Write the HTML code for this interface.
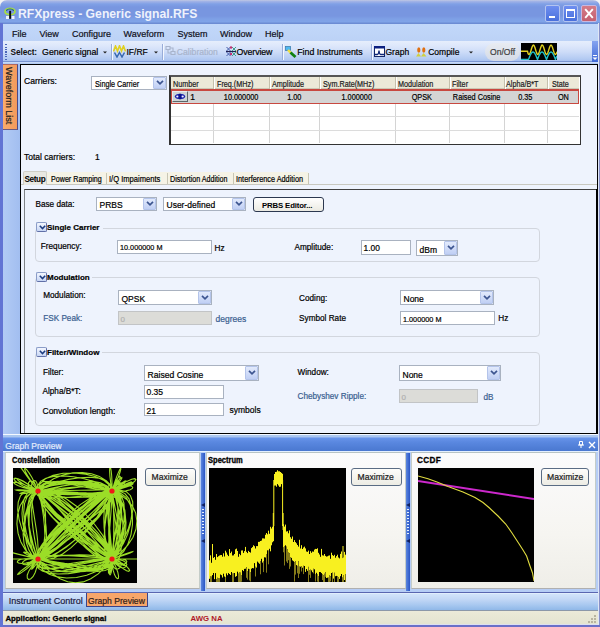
<!DOCTYPE html>
<html><head><meta charset="utf-8"><style>
*{box-sizing:border-box;margin:0;padding:0}
html,body{width:600px;height:627px;overflow:hidden;background:#6a7ed8}
body{position:relative;font-family:"Liberation Sans",sans-serif;font-size:9px;color:#000}
.a{position:absolute}
.t{position:absolute;white-space:nowrap;line-height:12px;color:#000;-webkit-text-stroke:0.2px currentColor}
.combo{position:absolute;background:#fff;border:1px solid #a9b2c0}
.combo .dd{position:absolute;right:0;top:0;bottom:0;background:linear-gradient(#e2eafc,#c0cff4);border:1px solid #b4c4ea;border-radius:1px}
.tb{position:absolute;background:#fff;border:1px solid #a9b2c0}
.dis{background:#dcdcd8;border-color:#c2c4c6}
.exp{position:absolute;width:11px;height:10px;border:1px solid #8a9cc8;border-right-color:#6070a8;border-bottom-color:#6070a8;background:linear-gradient(#f4f7ff,#c8d6f4);border-radius:2px}
.btnmax{position:absolute;border:1px solid #5a6c84;border-radius:3px;background:linear-gradient(#fdfdfb,#edece4)}
</style></head><body>
<div class="a" style="left:0px;top:0px;width:8px;height:8px;background:#f2f2f4"></div>
<div class="a" style="left:592px;top:0px;width:8px;height:8px;background:#f2f2f4"></div>
<div class="a" style="left:0px;top:0px;width:600px;height:24px;background:linear-gradient(#c0c8e4 0px,#a0b2e6 1.5px,#80a0e6 4px,#7896e0 7px,#7896e0 16px,#7ea0e6 19px,#80a4e8 22px,#6c8cd4 23px,#6c8cd4 24px);border-radius:7px 7px 0 0"></div>
<svg class="a" style="left:4px;top:7px" width="13" height="13" viewBox="0 0 13 13">
 <ellipse cx="6" cy="4.5" rx="5" ry="3.2" fill="none" stroke="#a8e040" stroke-width="1.7"/>
 <path d="M2.5,4 A3.5,2 0 0 1 9.5,4" fill="none" stroke="#2c6a80" stroke-width="1.2"/>
 <rect x="2" y="9" width="3" height="3" fill="#eef2ff"/><rect x="7.5" y="9" width="3" height="3" fill="#eef2ff"/>
 <rect x="5.2" y="3.8" width="1.9" height="8" fill="#0a0a0a"/>
</svg>
<div class="t" style="left:17.90px;top:8px;font-size:12.2px;font-weight:bold;-webkit-text-stroke:0;color:#eef2fc;">RFXpress - Generic signal.RFS</div>
<div class="a" style="left:545px;top:5px;width:15px;height:17px;border:1px solid #b4c4f0;border-radius:2px;background:linear-gradient(#6e8ef0,#4a70dc)"></div>
<div class="a" style="left:563px;top:5px;width:15px;height:17px;border:1px solid #b4c4f0;border-radius:2px;background:linear-gradient(#6e8ef0,#4a70dc)"></div>
<div class="a" style="left:581px;top:5px;width:16px;height:17px;border:1px solid #c8b8e0;border-radius:2px;background:linear-gradient(#d47c88,#c46070)"></div>
<div class="a" style="left:549px;top:16px;width:6px;height:2px;background:#fff"></div>
<div class="a" style="left:566px;top:9px;width:9px;height:9px;border:1px solid #fff;border-top-width:2px"></div>
<svg class="a" style="left:584px;top:8px" width="10" height="11" viewBox="0 0 10 11"><path d="M1.2,1.2L8.8,9.8M8.8,1.2L1.2,9.8" stroke="#fff" stroke-width="1.9"/></svg>
<div class="a" style="left:0px;top:23px;width:3px;height:604px;background:#6274d4"></div>
<div class="a" style="left:598px;top:23px;width:2px;height:604px;background:linear-gradient(90deg,#dfe6f6 50%,#8890c8 50%)"></div>
<div class="a" style="left:3px;top:24px;width:595px;height:17px;background:linear-gradient(#c2d8fa,#bcd2f6)"></div>
<div class="t" style="left:12.00px;top:28px;font-size:9px;color:#101020;">File</div>
<div class="t" style="left:39.50px;top:28px;font-size:9px;color:#101020;">View</div>
<div class="t" style="left:72.00px;top:28px;font-size:9px;color:#101020;">Configure</div>
<div class="t" style="left:123.50px;top:28px;font-size:9px;color:#101020;">Waveform</div>
<div class="t" style="left:177.50px;top:28px;font-size:9px;color:#101020;">System</div>
<div class="t" style="left:220.00px;top:28px;font-size:9px;color:#101020;">Window</div>
<div class="t" style="left:265.00px;top:28px;font-size:9px;color:#101020;">Help</div>
<div class="a" style="left:3px;top:41px;width:589px;height:21px;background:linear-gradient(#e6eefc 0px,#dde7fb 5px,#cddcf8 11px,#b3caf2 18px,#a4bdee 21px)"></div>
<div class="a" style="left:592px;top:41px;width:6px;height:21px;background:linear-gradient(#86a4f0,#3d68d6)"></div>
<svg class="a" style="left:592px;top:55px" width="6" height="6"><path d="M1,0.5H5" stroke="#fff"/><path d="M0.5,2.5H5.5L3,5Z" fill="#fff"/></svg>
<div class="a" style="left:5px;top:44px;width:2px;height:16px;background:repeating-linear-gradient(#4a66b8 0 1px,transparent 1px 2.5px)"></div>
<div class="t" style="left:10.50px;top:46px;font-size:8.3px;font-weight:bold;-webkit-text-stroke:0;color:#101010;letter-spacing:-0.1px">Select:</div>
<div class="t" style="left:42.10px;top:46px;font-size:8.8px;">Generic signal</div>
<svg class="a" style="left:103.0px;top:51px" width="4" height="3"><path d="M0,0.5H4L2,2.5Z" fill="#202020"/></svg>
<div class="a" style="left:111px;top:44px;width:1px;height:16px;background:#98acd8;box-shadow:1px 0 #f4f8ff"></div>
<svg class="a" style="left:113px;top:45px" width="13" height="13" viewBox="0 0 13 13">
 <path d="M0.5,6.5 L2.5,1 L4.5,6 L6.5,0.8 L8.5,6 L10.5,1 L12.5,6.5" fill="none" stroke="#e0d020" stroke-width="1.6"/>
 <path d="M1.5,7.5 L4,12 L6.5,7.5 L9,12 L11.5,7.5" fill="none" stroke="#3868b0" stroke-width="1.5"/>
</svg>
<div class="t" style="left:126.50px;top:46px;font-size:8.5px;">IF/RF</div>
<svg class="a" style="left:153.5px;top:51px" width="4" height="3"><path d="M0,0.5H4L2,2.5Z" fill="#202020"/></svg>
<div class="a" style="left:161.5px;top:44px;width:1px;height:16px;background:#98acd8;box-shadow:1px 0 #f4f8ff"></div>
<svg class="a" style="left:165px;top:45px" width="11" height="11" viewBox="0 0 11 11"><path d="M1,1.5h4v3h-4zM6,6.5h4v3h-4zM3,4.5v3.5h3M5,3h3v3.5" fill="none" stroke="#a8b4cc" stroke-width="1.1"/></svg>
<div class="t" style="left:176.80px;top:46px;font-size:8.6px;color:#a8b4cc;">Calibration</div>
<svg class="a" style="left:226px;top:46px" width="11" height="10" viewBox="0 0 11 10"> <path d="M0,5.5h10" stroke="#202050" stroke-width="1.2"/> <path d="M0.5,1L4.5,5M4.5,1L0.5,5M0.5,6L4.5,10M4.5,6L0.5,10" stroke="#4058a8" stroke-width="1"/> <path d="M6,1L10,5M10,1L6,5M6,6L10,10M10,6L6,10" stroke="#40a090" stroke-width="1"/> <circle cx="5" cy="1.5" r="1.2" fill="#c03070"/><circle cx="5" cy="8" r="1.2" fill="#c03070"/> </svg>
<div class="t" style="left:236.50px;top:46px;font-size:8.8px;letter-spacing:-0.1px">Overview</div>
<div class="a" style="left:282px;top:44px;width:1px;height:16px;background:#98acd8;box-shadow:1px 0 #f4f8ff"></div>
<svg class="a" style="left:285px;top:46px" width="12" height="12" viewBox="0 0 12 12"> <rect x="0.5" y="0.5" width="5" height="4" fill="#50b8f0" stroke="#4080b0" stroke-width="0.8"/> <path d="M3,4L6,7" stroke="#f0e040" stroke-width="2.4"/> <path d="M5.5,6.5L10.5,11" stroke="#108010" stroke-width="2.8"/> </svg>
<div class="t" style="left:297.20px;top:46px;font-size:8.8px;">Find Instruments</div>
<div class="a" style="left:370.5px;top:44px;width:1px;height:16px;background:#98acd8;box-shadow:1px 0 #f4f8ff"></div>
<svg class="a" style="left:374px;top:46px" width="11" height="11" viewBox="0 0 11 11"> <rect x="0.5" y="0.5" width="10" height="10" fill="#fff" stroke="#14286a"/><rect x="0" y="0" width="11" height="2.5" fill="#0c2080"/> <path d="M1,8.5H3.5Q4.5,8.5 5,4.5Q5.5,8.5 6.5,8.5H10" fill="none" stroke="#102878" stroke-width="1.3"/> </svg>
<div class="t" style="left:385.50px;top:46px;font-size:8.5px;">Graph</div>
<svg class="a" style="left:416px;top:46px" width="11" height="11" viewBox="0 0 11 11"> <ellipse cx="2.8" cy="4" rx="1.6" ry="2.8" fill="#e07010"/><ellipse cx="7.8" cy="4" rx="1.6" ry="2.8" fill="#e07010"/> <path d="M0,10.5L2.5,7L5,10.5ZM5,10.5L7.5,7L10.5,10.5Z" fill="#d0d040"/> </svg>
<div class="t" style="left:428.20px;top:46px;font-size:8.5px;">Compile</div>
<svg class="a" style="left:468.5px;top:51px" width="4" height="3"><path d="M0,0.5H4L2,2.5Z" fill="#202020"/></svg>
<div class="a" style="left:485px;top:43px;width:35px;height:18px;border-radius:9px;background:linear-gradient(#e8ecf2,#d4dae6)"></div>
<div class="t" style="left:489.50px;top:46px;font-size:9px;color:#404040;transform:scaleX(0.95);transform-origin:0 0;">On/Off</div>
<svg class="a" style="left:520.5px;top:43px" width="36" height="17" viewBox="0 0 36 17"><rect width="36" height="17" fill="#000"/>
 <path d="M0.0,8.2 L6.5,8.2 L7.0,10.4 L7.5,11.2 L8.0,11.5 L8.5,11.2 L9.0,10.4 L9.5,9.1 L10.0,7.5 L10.5,5.8 L11.0,4.3 L11.5,3.0 L12.0,2.3 L12.5,2.1 L13.0,2.5 L13.5,3.5 L14.0,4.8 L14.5,6.5 L15.0,8.1 L15.5,9.6 L16.0,10.8 L16.5,11.4 L17.0,11.5 L17.5,10.9 L18.0,9.9 L18.5,8.4 L19.0,6.8 L19.5,5.2 L20.0,3.7 L20.5,2.7 L21.0,2.1 L21.5,2.2 L22.0,2.8 L22.5,4.0 L23.0,5.5 L23.5,7.1 L24.0,8.8 L24.5,10.1 L25.0,11.1 L25.5,11.5 L26.0,11.3 L26.5,10.6 L27.0,9.3 L27.5,7.8 L28.0,6.1 L28.5,4.5 L29.0,3.2 L29.5,2.4 L30.0,2.1 L30.5,2.4 L31.0,3.2 L31.5,4.5 L32.0,6.1 L32.5,7.8 L33.0,9.3 L33.5,10.6 L34.0,11.3 L34.5,11.5 L35.0,11.1 L35.5,10.1 L36.0,8.8" fill="none" stroke="#e0d020" stroke-width="1.4"/>
 <path d="M0.0,16.5 L7.0,16.5 L7.5,16.5 L8.0,15.2 L8.5,13.9 L9.0,12.8 L9.5,11.7 L10.0,10.8 L10.5,10.0 L11.0,9.5 L11.5,9.1 L12.0,9.0 L12.5,9.1 L13.0,9.5 L13.5,10.0 L14.0,10.8 L14.5,11.7 L15.0,12.7 L15.5,13.9 L16.0,15.2 L16.5,16.5 L17.0,15.2 L17.5,13.9 L18.0,12.8 L18.5,11.7 L19.0,10.8 L19.5,10.0 L20.0,9.5 L20.5,9.1 L21.0,9.0 L21.5,9.1 L22.0,9.5 L22.5,10.0 L23.0,10.8 L23.5,11.7 L24.0,12.8 L24.5,13.9 L25.0,15.2 L25.5,16.5 L26.0,15.2 L26.5,13.9 L27.0,12.8 L27.5,11.7 L28.0,10.8 L28.5,10.0 L29.0,9.5 L29.5,9.1 L30.0,9.0 L30.5,9.1 L31.0,9.5 L31.5,10.0 L32.0,10.8 L32.5,11.7 L33.0,12.8 L33.5,13.9 L34.0,15.2 L34.5,16.5 L35.0,15.2 L35.5,13.9 L36.0,12.8" fill="none" stroke="#20c0c8" stroke-width="1.4"/>
</svg>
<div class="a" style="left:3px;top:61px;width:589px;height:1px;background:#7894d0"></div>
<div class="a" style="left:3px;top:62px;width:595px;height:2px;background:linear-gradient(#d0e0fa,#a8c4f0)"></div>
<div class="a" style="left:3px;top:64px;width:17px;height:370px;background:linear-gradient(90deg,#b2cbf5,#a2bef0)"></div>
<div class="a" style="left:3px;top:64px;width:15px;height:66px;background:linear-gradient(90deg,#f8ac6c,#f29a5c);border-right:1px solid #4a4a88;border-bottom:1px solid #6a5a80;border-top:1px solid #b06860"></div>
<div class="t" style="left:15px;top:66.5px;transform-origin:0 0;transform:rotate(90deg);font-size:9px;color:#202020;line-height:12px">Waveform List</div>
<div class="a" style="left:20px;top:64px;width:578px;height:370px;border:1px solid #000;background:#eef3fd"></div>
<div class="t" style="left:24.00px;top:75px;font-size:8.6px;">Carriers:</div>
<div class="combo" style="left:91px;top:76px;width:76px;height:14px"><div class="dd" style="width:13px"><svg width="8" height="5" style="position:absolute;left:2px;top:2px"><path d="M1,0.8L4,3.8L7,0.8" fill="none" stroke="#3d5590" stroke-width="1.7"/></svg></div></div>
<div class="t" style="left:94.50px;top:78px;font-size:8.6px;transform:scaleX(0.84);transform-origin:0 0;">Single Carrier</div>
<div class="t" style="left:24.00px;top:151px;font-size:8.5px;">Total carriers:</div>
<div class="t" style="left:95.00px;top:151px;font-size:8.5px;">1</div>
<div class="a" style="left:169px;top:75px;width:412px;height:70px;background:#fff;border:1px solid #333;border-width:1px 1px 1px 2px;border-top:2px solid #555"></div>
<div class="a" style="left:171px;top:77px;width:408px;height:12px;background:#ece9d8;border-bottom:1px solid #cbc7b4"></div>
<div class="a" style="left:213px;top:89px;width:1px;height:54px;background:#d4d4d4"></div>
<div class="a" style="left:213px;top:77px;width:1px;height:12px;background:#c4c0ac;box-shadow:1px 0 #fff"></div>
<div class="a" style="left:269px;top:89px;width:1px;height:54px;background:#d4d4d4"></div>
<div class="a" style="left:269px;top:77px;width:1px;height:12px;background:#c4c0ac;box-shadow:1px 0 #fff"></div>
<div class="a" style="left:319px;top:89px;width:1px;height:54px;background:#d4d4d4"></div>
<div class="a" style="left:319px;top:77px;width:1px;height:12px;background:#c4c0ac;box-shadow:1px 0 #fff"></div>
<div class="a" style="left:395px;top:89px;width:1px;height:54px;background:#d4d4d4"></div>
<div class="a" style="left:395px;top:77px;width:1px;height:12px;background:#c4c0ac;box-shadow:1px 0 #fff"></div>
<div class="a" style="left:449px;top:89px;width:1px;height:54px;background:#d4d4d4"></div>
<div class="a" style="left:449px;top:77px;width:1px;height:12px;background:#c4c0ac;box-shadow:1px 0 #fff"></div>
<div class="a" style="left:504px;top:89px;width:1px;height:54px;background:#d4d4d4"></div>
<div class="a" style="left:504px;top:77px;width:1px;height:12px;background:#c4c0ac;box-shadow:1px 0 #fff"></div>
<div class="a" style="left:547px;top:89px;width:1px;height:54px;background:#d4d4d4"></div>
<div class="a" style="left:547px;top:77px;width:1px;height:12px;background:#c4c0ac;box-shadow:1px 0 #fff"></div>
<div class="a" style="left:171px;top:116px;width:408px;height:1px;background:#dcdcdc"></div>
<div class="a" style="left:171px;top:130px;width:408px;height:1px;background:#dcdcdc"></div>
<div class="a" style="left:171px;top:89px;width:408px;height:15px;background:#d4d4d4;border:1px solid #c84840;border-width:2px 1px 1px 1px"></div>
<div class="a" style="left:172px;top:91px;width:16px;height:11px;background:#cdd4d6;border:1px solid #e6ecee;border-right-color:#5c6668;border-bottom-color:#5c6668"></div>
<svg class="a" style="left:174px;top:93px" width="12" height="7" viewBox="0 0 12 7"><ellipse cx="6" cy="3.5" rx="5.2" ry="2.8" fill="#1a20a8"/><circle cx="3.3" cy="3.5" r="1.1" fill="#f0f0ff"/><circle cx="8.7" cy="3.5" r="1.1" fill="#f0f0ff"/><rect x="5.3" y="0.8" width="1.4" height="5.4" fill="#0a1070"/></svg>
<div class="t" style="left:173.40px;top:78px;font-size:8.6px;color:#202020;transform:scaleX(0.84);transform-origin:0 0;">Number</div>
<div class="t" style="left:217.40px;top:78px;font-size:8.6px;color:#202020;transform:scaleX(0.84);transform-origin:0 0;">Freq.(MHz)</div>
<div class="t" style="left:271.50px;top:78px;font-size:8.6px;color:#202020;transform:scaleX(0.84);transform-origin:0 0;">Amplitude</div>
<div class="t" style="left:322.80px;top:78px;font-size:8.6px;color:#202020;transform:scaleX(0.84);transform-origin:0 0;">Sym.Rate(MHz)</div>
<div class="t" style="left:398.00px;top:78px;font-size:8.6px;color:#202020;transform:scaleX(0.84);transform-origin:0 0;">Modulation</div>
<div class="t" style="left:452.20px;top:78px;font-size:8.6px;color:#202020;transform:scaleX(0.84);transform-origin:0 0;">Filter</div>
<div class="t" style="left:506.00px;top:78px;font-size:8.6px;color:#202020;transform:scaleX(0.84);transform-origin:0 0;">Alpha/B*T</div>
<div class="t" style="left:552.00px;top:78px;font-size:8.6px;color:#202020;transform:scaleX(0.84);transform-origin:0 0;">State</div>
<div class="t" style="left:190.20px;top:91px;font-size:8.5px;">1</div>
<div class="t" style="left:213px;width:56px;top:91px;font-size:8.5px;text-align:center"><span style="display:inline-block;transform:scaleX(0.86)">10.000000</span></div>
<div class="t" style="left:269px;width:50px;top:91px;font-size:8.5px;text-align:center"><span style="display:inline-block;transform:scaleX(0.86)">1.00</span></div>
<div class="t" style="left:319px;width:76px;top:91px;font-size:8.5px;text-align:center"><span style="display:inline-block;transform:scaleX(0.86)">1.000000</span></div>
<div class="t" style="left:395px;width:54px;top:91px;font-size:8.5px;text-align:center"><span style="display:inline-block;transform:scaleX(0.86)">QPSK</span></div>
<div class="t" style="left:449px;width:55px;top:91px;font-size:8.5px;text-align:center"><span style="display:inline-block;transform:scaleX(0.86)">Raised Cosine</span></div>
<div class="t" style="left:504px;width:43px;top:91px;font-size:8.5px;text-align:center"><span style="display:inline-block;transform:scaleX(0.86)">0.35</span></div>
<div class="t" style="left:547px;width:32px;top:91px;font-size:8.5px;text-align:center"><span style="display:inline-block;transform:scaleX(0.86)">ON</span></div>
<div class="a" style="left:21px;top:184px;width:576px;height:1px;background:#c8c8c0"></div>
<div class="a" style="left:23px;top:171px;width:24px;height:14px;background:#e8e8e2;border:1px solid #d0cfc6;border-bottom:none;border-radius:2px 2px 0 0"></div>
<div class="t" style="left:24.50px;top:174px;font-size:8.2px;font-weight:bold;-webkit-text-stroke:0;letter-spacing:-0.4px">Setup</div>
<div class="a" style="left:47px;top:172px;width:261px;height:12px;background:#f5f3e6"></div>
<div class="a" style="left:105.5px;top:173px;width:1px;height:11px;background:#c8c6b4"></div>
<div class="a" style="left:166.5px;top:173px;width:1px;height:11px;background:#c8c6b4"></div>
<div class="a" style="left:232.5px;top:173px;width:1px;height:11px;background:#c8c6b4"></div>
<div class="a" style="left:307.5px;top:173px;width:1px;height:11px;background:#c8c6b4"></div>
<div class="t" style="left:50.50px;top:173px;font-size:8.5px;transform:scaleX(0.84);transform-origin:0 0;">Power Ramping</div>
<div class="t" style="left:109.20px;top:173px;font-size:8.5px;transform:scaleX(0.89);transform-origin:0 0;">I/Q Impaiments</div>
<div class="t" style="left:170.20px;top:173px;font-size:8.5px;transform:scaleX(0.84);transform-origin:0 0;">Distortion Addition</div>
<div class="t" style="left:236.30px;top:173px;font-size:8.5px;transform:scaleX(0.86);transform-origin:0 0;">Interference Addition</div>
<div class="a" style="left:24px;top:189px;width:573px;height:244px;border-left:1px solid #808488;border-top:1px solid #404040;background:#eef3fd"></div>
<div class="a" style="left:596px;top:189px;width:2px;height:245px;background:#000"></div>
<div class="a" style="left:21px;top:433px;width:577px;height:1px;background:#000"></div>
<div class="t" style="left:35.50px;top:199px;font-size:8.2px;">Base data:</div>
<div class="combo" style="left:96px;top:197px;width:61px;height:14px"><div class="dd" style="width:13px"><svg width="8" height="5" style="position:absolute;left:2px;top:2px"><path d="M1,0.8L4,3.8L7,0.8" fill="none" stroke="#3d5590" stroke-width="1.7"/></svg></div></div>
<div class="t" style="left:99.50px;top:199px;font-size:8.5px;">PRBS</div>
<div class="combo" style="left:163px;top:197px;width:83px;height:14px"><div class="dd" style="width:13px"><svg width="8" height="5" style="position:absolute;left:2px;top:2px"><path d="M1,0.8L4,3.8L7,0.8" fill="none" stroke="#3d5590" stroke-width="1.7"/></svg></div></div>
<div class="t" style="left:166.50px;top:199px;font-size:8.5px;">User-defined</div>
<div class="a" style="left:253px;top:197px;width:71px;height:15px;border:1px solid #2c3850;border-radius:3px;background:linear-gradient(#ffffff,#ebeae2)"></div>
<div class="t" style="left:262.00px;top:200px;font-size:7.8px;font-weight:bold;-webkit-text-stroke:0;letter-spacing:-0.15px">PRBS Editor...</div>
<div class="a" style="left:35px;top:228px;width:505px;height:34px;border:1px solid #d2d6de;border-radius:4px"></div>
<div class="a" style="left:46px;top:226px;width:57px;height:5px;background:#eef3fd"></div>
<div class="exp" style="left:36px;top:222px"><svg width="7" height="5" style="position:absolute;left:1.5px;top:2px"><path d="M0.8,0.8L3.5,3.6L6.2,0.8" fill="none" stroke="#1c3c80" stroke-width="1.5"/></svg></div>
<div class="t" style="left:47.00px;top:222px;font-size:8px;font-weight:bold;-webkit-text-stroke:0;color:#000;-webkit-text-stroke:0.2px #000">Single Carrier</div>
<div class="t" style="left:40.80px;top:241px;font-size:8.2px;">Frequency:</div>
<div class="tb" style="left:117px;top:240px;width:95px;height:14px"></div>
<div class="t" style="left:119.50px;top:242px;font-size:8px;transform:scaleX(0.91);transform-origin:0 0;">10.000000 M</div>
<div class="t" style="left:214.50px;top:243px;font-size:8.2px;">Hz</div>
<div class="t" style="left:294.50px;top:242px;font-size:8.2px;">Amplitude:</div>
<div class="tb" style="left:361px;top:240px;width:50px;height:15px"></div>
<div class="t" style="left:363.50px;top:242px;font-size:8.4px;">1.00</div>
<div class="combo" style="left:416px;top:240px;width:42px;height:16px"><div class="dd" style="width:13px"><svg width="8" height="5" style="position:absolute;left:2px;top:3px"><path d="M1,0.8L4,3.8L7,0.8" fill="none" stroke="#3d5590" stroke-width="1.7"/></svg></div></div>
<div class="t" style="left:419.50px;top:244px;font-size:8.5px;">dBm</div>
<div class="a" style="left:35px;top:277px;width:505px;height:60px;border:1px solid #d2d6de;border-radius:4px"></div>
<div class="a" style="left:46px;top:275px;width:46px;height:5px;background:#eef3fd"></div>
<div class="exp" style="left:36px;top:272px"><svg width="7" height="5" style="position:absolute;left:1.5px;top:2px"><path d="M0.8,0.8L3.5,3.6L6.2,0.8" fill="none" stroke="#1c3c80" stroke-width="1.5"/></svg></div>
<div class="t" style="left:47.00px;top:272px;font-size:8px;font-weight:bold;-webkit-text-stroke:0;color:#000;-webkit-text-stroke:0.2px #000">Modulation</div>
<div class="t" style="left:43.20px;top:290px;font-size:8.2px;">Modulation:</div>
<div class="combo" style="left:118px;top:290px;width:94px;height:15px"><div class="dd" style="width:13px"><svg width="8" height="5" style="position:absolute;left:2px;top:3px"><path d="M1,0.8L4,3.8L7,0.8" fill="none" stroke="#3d5590" stroke-width="1.7"/></svg></div></div>
<div class="t" style="left:121.50px;top:293px;font-size:8.5px;">QPSK</div>
<div class="t" style="left:43.20px;top:313px;font-size:8.2px;color:#3a6090;">FSK Peak:</div>
<div class="tb dis" style="left:118px;top:311px;width:94px;height:14px"></div>
<div class="t" style="left:120.50px;top:314px;font-size:8px;color:#b0b0b0;">0</div>
<div class="t" style="left:215.50px;top:313px;font-size:8.5px;color:#3a6090;">degrees</div>
<div class="t" style="left:299.10px;top:293px;font-size:8.2px;">Coding:</div>
<div class="combo" style="left:400px;top:290px;width:94px;height:15px"><div class="dd" style="width:13px"><svg width="8" height="5" style="position:absolute;left:2px;top:3px"><path d="M1,0.8L4,3.8L7,0.8" fill="none" stroke="#3d5590" stroke-width="1.7"/></svg></div></div>
<div class="t" style="left:403.50px;top:293px;font-size:8.5px;">None</div>
<div class="t" style="left:299.10px;top:313px;font-size:8.2px;">Symbol Rate</div>
<div class="tb" style="left:400px;top:311px;width:95px;height:14px"></div>
<div class="t" style="left:402.50px;top:314px;font-size:8px;transform:scaleX(0.91);transform-origin:0 0;">1.000000 M</div>
<div class="t" style="left:498.30px;top:313px;font-size:8.2px;">Hz</div>
<div class="a" style="left:35px;top:352px;width:505px;height:74px;border:1px solid #d2d6de;border-radius:4px"></div>
<div class="a" style="left:46px;top:350px;width:56px;height:5px;background:#eef3fd"></div>
<div class="exp" style="left:36px;top:347px"><svg width="7" height="5" style="position:absolute;left:1.5px;top:2px"><path d="M0.8,0.8L3.5,3.6L6.2,0.8" fill="none" stroke="#1c3c80" stroke-width="1.5"/></svg></div>
<div class="t" style="left:47.00px;top:347px;font-size:8px;font-weight:bold;-webkit-text-stroke:0;color:#000;-webkit-text-stroke:0.2px #000">Filter/Window</div>
<div class="t" style="left:43.00px;top:367px;font-size:8.2px;">Filter:</div>
<div class="combo" style="left:144px;top:365px;width:115px;height:16px"><div class="dd" style="width:13px"><svg width="8" height="5" style="position:absolute;left:2px;top:3px"><path d="M1,0.8L4,3.8L7,0.8" fill="none" stroke="#3d5590" stroke-width="1.7"/></svg></div></div>
<div class="t" style="left:147.50px;top:369px;font-size:8.6px;">Raised Cosine</div>
<div class="t" style="left:42.50px;top:386px;font-size:8.2px;">Alpha/B*T:</div>
<div class="tb" style="left:144px;top:385px;width:80px;height:14px"></div>
<div class="t" style="left:146.50px;top:386px;font-size:8.5px;">0.35</div>
<div class="t" style="left:42.50px;top:405px;font-size:8.5px;">Convolution length:</div>
<div class="tb" style="left:144px;top:403px;width:80px;height:13px"></div>
<div class="t" style="left:146.50px;top:405px;font-size:8.5px;">21</div>
<div class="t" style="left:229.50px;top:404px;font-size:8.5px;">symbols</div>
<div class="t" style="left:297.50px;top:367px;font-size:8.2px;">Window:</div>
<div class="combo" style="left:399px;top:365px;width:102px;height:16px"><div class="dd" style="width:13px"><svg width="8" height="5" style="position:absolute;left:2px;top:3px"><path d="M1,0.8L4,3.8L7,0.8" fill="none" stroke="#3d5590" stroke-width="1.7"/></svg></div></div>
<div class="t" style="left:402.50px;top:369px;font-size:8.5px;">None</div>
<div class="t" style="left:297.50px;top:391px;font-size:8.2px;color:#3a6090;">Chebyshev Ripple:</div>
<div class="tb dis" style="left:399px;top:389px;width:79px;height:14px"></div>
<div class="t" style="left:401.50px;top:392px;font-size:8px;color:#b0b0b0;">0</div>
<div class="t" style="left:483.50px;top:392px;font-size:8.2px;color:#3a6090;">dB</div>
<div class="a" style="left:3px;top:434px;width:595px;height:1px;background:#f4f8ff"></div>
<div class="a" style="left:3px;top:435px;width:595px;height:2px;background:#abc7f0"></div>
<div class="a" style="left:3px;top:437px;width:595px;height:14px;background:linear-gradient(#a8c4f4 0px,#6894ea 1px,#5a88e0 5px,#4a78d0 14px)"></div>
<div class="a" style="left:3px;top:451px;width:595px;height:1px;background:#e4f0ff"></div>
<div class="t" style="left:5.30px;top:440px;font-size:8.5px;color:#e4ecfc;">Graph Preview</div>
<svg class="a" style="left:578px;top:441px" width="6" height="7" viewBox="0 0 6 7"><path d="M1.5,0.5H4.5V4H1.5ZM0,4H6M3,4V7" fill="none" stroke="#fff" stroke-width="1"/></svg>
<svg class="a" style="left:588px;top:441px" width="8" height="8" viewBox="0 0 8 8"><path d="M1,1L7,7M7,1L1,7" stroke="#fff" stroke-width="1.4"/></svg>
<div class="a" style="left:3px;top:452px;width:595px;height:140px;background:#b6cdf5"></div>
<div class="a" style="left:5px;top:452px;width:195px;height:137px;background:linear-gradient(#fbfbfc,#f6f5f1 60%,#efeee8);border:1px solid #c4ccc8;border-top-color:#b8c4c4;border-bottom-color:#b0b0b0"></div>
<div class="a" style="left:206px;top:452px;width:200px;height:137px;background:linear-gradient(#fbfbfc,#f6f5f1 60%,#efeee8);border:1px solid #c4ccc8;border-top-color:#b8c4c4;border-bottom-color:#b0b0b0"></div>
<div class="a" style="left:411px;top:452px;width:185px;height:137px;background:linear-gradient(#fbfbfc,#f6f5f1 60%,#efeee8);border:1px solid #c4ccc8;border-top-color:#b8c4c4;border-bottom-color:#b0b0b0"></div>
<div class="a" style="left:201px;top:453px;width:4px;height:138px;background:linear-gradient(90deg,#5c86de,#2a56c6)"></div>
<div class="a" style="left:202px;top:509px;width:2px;height:26px;background:repeating-linear-gradient(#e8f0ff 0 1px,transparent 1px 3px)"></div>
<svg class="a" style="left:201px;top:503px" width="4" height="4"><path d="M0,2L4,0V4Z" fill="#102060"/></svg>
<svg class="a" style="left:201px;top:539px" width="4" height="4"><path d="M0,2L4,0V4Z" fill="#102060"/></svg>
<div class="a" style="left:406px;top:453px;width:4px;height:138px;background:linear-gradient(90deg,#5c86de,#2a56c6)"></div>
<div class="a" style="left:407px;top:509px;width:2px;height:26px;background:repeating-linear-gradient(#e8f0ff 0 1px,transparent 1px 3px)"></div>
<svg class="a" style="left:406px;top:503px" width="4" height="4"><path d="M0,2L4,0V4Z" fill="#102060"/></svg>
<svg class="a" style="left:406px;top:539px" width="4" height="4"><path d="M0,2L4,0V4Z" fill="#102060"/></svg>
<div class="t" style="left:12.00px;top:455px;font-size:8.2px;font-weight:bold;-webkit-text-stroke:0;color:#000;transform:scaleX(0.92);transform-origin:0 0;-webkit-text-stroke:0.3px #000">Constellation</div>
<svg class="a" style="left:13px;top:468px" width="124" height="115" viewBox="0 0 124 115"><rect width="124" height="115" fill="#000"/>
 <path d="M25.0,23.0 L24.6,17.8 L23.7,14.4 L22.5,12.8 L21.0,12.6 L19.7,13.7 L18.8,15.6 L18.6,17.8 L19.4,20.0 L21.5,21.8 L25.0,23.0 L29.8,23.5 L36.0,23.2 L43.4,22.4 L51.6,21.1 L60.4,19.9 L69.3,18.8 L78.0,18.4 L86.0,18.8 L93.1,20.3 L99.0,23.0 L103.5,27.0 L106.6,32.1 L108.3,38.4 L108.7,45.5 L108.1,53.2 L106.7,61.3 L104.8,69.4 L102.7,77.2 L100.7,84.5 L99.0,91.0 L97.7,96.6 L96.8,101.0 L96.5,104.2 L96.6,106.2 L97.1,106.8 L97.7,106.1 L98.3,104.1 L98.8,100.8 L99.1,96.4 L99.0,91.0 L98.6,84.7 L97.9,77.7 L97.0,70.1 L96.1,62.4 L95.3,54.5 L94.9,46.9 L95.0,39.8 L95.7,33.3 L97.0,27.6 L99.0,23.0 L101.5,19.4 L104.2,16.9 L107.0,15.5 L109.4,15.1 L111.1,15.5 L111.7,16.5 L111.0,18.0 L108.7,19.7 L104.7,21.5 L99.0,23.0 L91.7,24.2 L83.2,25.1 L73.8,25.5 L63.9,25.5 L54.2,25.1 L45.2,24.6 L37.3,24.0 L31.1,23.4 L26.9,23.1 L25.0,23.0 L25.5,23.2 L28.3,23.7 L33.4,24.4 L40.4,25.2 L48.9,25.9 L58.6,26.4 L69.0,26.4 L79.5,25.9 L89.6,24.7 L99.0,23.0 L107.2,20.8 L113.9,18.2 L118.9,15.5 L121.9,13.1 L122.9,11.4 L121.8,10.6 L118.7,11.2 L113.7,13.4 L107.1,17.3 L99.0,23.0 L89.8,30.4 L80.0,39.0 L69.8,48.6 L59.7,58.5 L50.2,68.1 L41.7,76.7 L34.6,83.8 L29.3,88.7 L26.0,91.2 L25.0,91.0 L26.2,88.1 L29.7,82.7 L35.2,75.3 L42.4,66.4 L51.1,56.8 L60.7,47.2 L70.8,38.3 L80.9,31.0 L90.4,25.8 L99.0,23.0 L106.3,23.0 L112.0,25.6 L116.0,30.8 L118.2,38.0 L118.7,46.7 L117.4,56.4 L114.6,66.2 L110.4,75.6 L105.2,84.0 L99.0,91.0 L92.1,96.2 L84.7,99.6 L76.9,101.3 L69.0,101.4 L61.0,100.3 L53.0,98.4 L45.3,96.1 L38.0,93.9 L31.2,92.1 L25.0,91.0 L19.6,90.7 L15.3,91.1 L12.1,92.2 L10.1,93.6 L9.4,95.1 L10.0,96.2 L12.0,96.7 L15.3,96.1 L19.6,94.3 L25.0,91.0 L31.2,86.3 L38.0,80.3 L45.4,73.2 L53.1,65.2 L61.0,56.9 L69.0,48.5 L76.9,40.6 L84.6,33.6 L92.0,27.6 L99.0,23.0 L105.3,19.8 L110.8,18.0 L115.2,17.5 L118.2,17.9 L119.7,19.1 L119.4,20.5 L117.2,21.8 L113.0,22.9 L106.9,23.3 L99.0,23.0 L89.6,22.0 L79.2,20.4 L68.2,18.4 L57.3,16.3 L47.0,14.5 L38.1,13.5 L31.0,13.6 L26.3,15.1 L24.3,18.2 L25.0,23.0 L28.4,29.4 L34.3,37.1 L42.3,45.9 L51.7,55.2 L61.9,64.4 L72.1,73.0 L81.5,80.4 L89.5,86.1 L95.5,89.7 L99.0,91.0 L99.8,89.9 L97.8,86.4 L93.1,80.9 L86.1,73.7 L77.2,65.2 L66.9,56.0 L56.0,46.8 L45.0,37.9 L34.5,29.8 L25.0,23.0 L17.0,17.6 L10.8,13.8 L6.6,11.6 L4.3,10.8 L4.1,11.3 L5.6,12.8 L8.7,15.0 L13.1,17.6 L18.7,20.4 L25.0,23.0 L31.9,25.3 L39.2,27.2 L46.8,28.6 L54.5,29.3 L62.3,29.5 L70.0,29.1 L77.7,28.1 L85.1,26.7 L92.3,25.0 L99.0,23.0 L105.1,20.9 L110.3,18.7 L114.4,16.8 L117.3,15.2 L118.7,14.2 L118.3,13.9 L116.2,14.5 L112.2,16.2 L106.4,19.0 L99.0,23.0 L90.2,28.2 L80.4,34.5 L70.1,41.6 L59.7,49.5 L49.8,57.6 L41.0,65.7 L33.7,73.4 L28.4,80.4 L25.5,86.3 L25.0,91.0 L27.0,94.4 L31.5,96.4 L38.0,97.1 L46.2,96.8 L55.5,95.7 L65.4,94.3 L75.2,92.8 L84.4,91.5 L92.5,90.9 L99.0,91.0 L103.8,91.9 L106.8,93.5 L108.2,95.6 L108.0,97.8 L106.8,99.8 L104.9,101.0 L102.8,101.0 L100.9,99.5 L99.5,96.2 L99.0,91.0 L99.4,84.0 L100.6,75.5 L102.4,65.8 L104.5,55.7 L106.4,45.9 L107.8,37.0 L108.0,29.7 L106.8,24.7 L103.8,22.4 L99.0,23.0 L92.3,26.5 L84.1,32.6 L74.6,40.9 L64.5,50.5 L54.4,60.8 L44.9,70.7 L36.7,79.3 L30.3,85.9 L26.4,90.0 L25.0,91.0 L26.4,88.9 L30.4,84.0 L36.7,76.5 L44.9,67.3 L54.3,57.1 L64.4,46.9 L74.5,37.7 L84.0,30.2 L92.3,25.1 L99.0,23.0 L104.0,24.0 L107.1,28.0 L108.6,34.6 L108.5,43.2 L107.4,53.0 L105.5,63.3 L103.4,72.9 L101.4,81.2 L99.8,87.4 L99.0,91.0 L98.9,91.7 L99.6,89.5 L100.8,84.5 L102.4,77.3 L103.9,68.4 L105.1,58.4 L105.4,48.3 L104.6,38.6 L102.6,30.0 L99.0,23.0 L94.0,17.9 L87.6,14.7 L80.0,13.3 L71.6,13.5 L62.8,14.9 L53.9,17.0 L45.4,19.3 L37.5,21.2 L30.7,22.6 L25.0,23.0 L20.6,22.4 L17.6,21.0 L15.8,19.0 L15.2,16.7 L15.6,14.6 L16.7,13.3 L18.4,13.1 L20.5,14.5 L22.8,17.8 L25.0,23.0 L27.1,30.0 L28.9,38.6 L30.4,48.2 L31.4,58.3 L31.9,68.2 L31.8,77.0 L31.0,84.3 L29.6,89.2 L27.6,91.5 L25.0,91.0 L22.0,87.6 L18.9,81.6 L15.8,73.6 L13.2,64.2 L11.4,54.1 L10.7,44.3 L11.5,35.6 L14.1,28.8 L18.6,24.5 L25.0,23.0 L33.2,24.5 L42.8,28.8 L53.3,35.6 L64.3,44.3 L74.8,54.1 L84.3,64.2 L92.0,73.7 L97.3,81.7 L99.7,87.6 L99.0,91.0 L95.2,91.5 L88.6,89.1 L79.7,84.0 L69.3,76.7 L58.2,67.8 L47.4,57.9 L37.9,47.9 L30.6,38.3 L26.2,29.9 L25.0,23.0 L27.3,18.0 L32.8,14.8 L41.0,13.5 L51.3,13.7 L62.6,15.1 L73.8,17.1 L84.0,19.2 L92.0,21.2 L97.2,22.5 L99.0,23.0 L97.2,22.6 L92.0,21.4 L83.8,19.7 L73.6,17.7 L62.1,15.9 L50.7,14.7 L40.3,14.5 L32.1,15.7 L26.8,18.5 L25.0,23.0 L26.8,29.1 L32.0,36.6 L40.3,45.2 L50.6,54.3 L62.1,63.4 L73.6,71.9 L83.9,79.4 L92.1,85.3 L97.3,89.3 L99.0,91.0 L97.1,90.4 L91.7,87.6 L83.4,82.6 L73.0,75.9 L61.6,67.8 L50.2,58.7 L39.9,49.3 L31.9,39.9 L26.7,31.0 L25.0,23.0 L26.8,16.3 L32.0,11.0 L40.1,7.4 L50.2,5.3 L61.4,5.0 L72.6,6.1 L82.9,8.7 L91.1,12.5 L96.6,17.3 L99.0,23.0 L98.0,29.4 L93.8,36.2 L86.7,43.4 L77.5,50.7 L67.0,58.1 L56.0,65.4 L45.6,72.4 L36.5,79.1 L29.4,85.4 L25.0,91.0 L23.5,95.9 L25.0,100.0 L29.3,103.1 L36.2,105.2 L45.0,106.0 L55.4,105.6 L66.5,103.9 L77.9,100.8 L88.9,96.5 L99.0,91.0 L107.8,84.5 L114.8,77.1 L120.0,69.2 L123.0,61.0 L123.9,52.9 L122.7,45.1 L119.4,38.0 L114.2,31.9 L107.3,26.8 L99.0,23.0 L89.6,20.5 L79.4,19.1 L69.0,18.8 L58.7,19.3 L49.0,20.3 L40.5,21.5 L33.5,22.6 L28.4,23.3 L25.5,23.5 L25.0,23.0 L26.8,21.9 L30.9,20.2 L37.0,18.2 L44.8,16.2 L53.8,14.5 L63.5,13.6 L73.4,13.8 L82.9,15.3 L91.5,18.3 L99.0,23.0 L105.0,29.2 L109.3,36.7 L112.0,45.2 L113.0,54.2 L112.6,63.2 L110.9,71.7 L108.5,79.1 L105.4,85.0 L102.2,89.1 L99.0,91.0 L96.1,90.7 L93.8,88.1 L92.1,83.5 L91.2,77.1 L91.1,69.2 L91.7,60.3 L92.9,50.7 L94.6,41.1 L96.7,31.7 L99.0,23.0 L101.3,15.4 L103.5,9.1 L105.4,4.4 L106.9,1.4 L107.7,0.3 L107.8,1.2 L107.1,4.0 L105.4,8.7 L102.7,15.1 L99.0,23.0 L94.2,32.1 L88.5,42.0 L81.9,52.2 L74.5,62.3 L66.5,71.6 L58.1,79.7 L49.5,86.0 L41.0,90.1 L32.7,91.9 L25.0,91.0 L18.1,87.6 L12.4,81.9 L8.0,74.3 L5.1,65.4 L3.9,55.9 L4.6,46.4 L7.1,37.8 L11.4,30.7 L17.4,25.6 L25.0,23.0 L33.8,23.1 L43.4,25.8 L53.5,31.0 L63.5,38.2 L73.1,46.9 L81.7,56.5 L89.0,66.3 L94.4,75.7 L97.8,84.1 L99.0,91.0 L97.9,96.2 L94.5,99.7 L89.0,101.4 L81.7,101.5 L73.1,100.4 L63.5,98.6 L53.4,96.3 L43.3,94.1 L33.7,92.2 L25.0,91.0 L17.5,90.5 L11.6,90.7 L7.3,91.5 L4.9,92.7 L4.3,94.0 L5.5,95.0 L8.3,95.5 L12.7,95.1 L18.3,93.7 L25.0,91.0 L32.5,87.0 L40.7,81.8 L49.1,75.5 L57.7,68.4 L66.1,60.6 L74.2,52.5 L81.6,44.4 L88.4,36.6 L94.2,29.4 L99.0,23.0 L102.7,17.6 L105.3,13.4 L106.8,10.4 L107.3,8.6 L106.9,8.2 L105.8,9.0 L104.3,10.9 L102.5,14.0 L100.7,18.0 L99.0,23.0 L97.6,28.7 L96.7,35.1 L96.2,42.0 L96.1,49.3 L96.5,56.8 L97.0,64.3 L97.7,71.6 L98.4,78.6 L98.8,85.2 L99.0,91.0 L98.8,96.0 L98.3,100.0 L97.6,103.0 L96.8,104.8 L96.0,105.4 L95.5,104.8 L95.4,102.9 L95.9,100.0 L97.1,96.0 L99.0,91.0 L101.4,85.2 L104.3,78.7 L107.2,71.8 L109.8,64.5 L111.7,57.0 L112.5,49.6 L111.9,42.3 L109.5,35.3 L105.2,28.8 L99.0,23.0 L91.0,17.9 L81.6,13.8 L71.2,10.7 L60.4,8.7 L50.0,7.9 L40.6,8.4 L32.9,10.2 L27.5,13.3 L24.8,17.6 L25.0,23.0 L28.2,29.3 L34.0,36.4 L42.1,44.1 L51.8,52.0 L62.3,59.9 L72.8,67.5 L82.4,74.7 L90.4,81.1 L96.1,86.6 L99.0,91.0 L99.0,94.3 L96.0,96.6 L90.4,97.8 L82.5,98.1 L72.9,97.7 L62.4,96.7 L51.7,95.4 L41.5,93.9 L32.5,92.4 L25.0,91.0 L19.4,89.8 L15.8,89.0 L14.1,88.5 L14.0,88.3 L15.2,88.4 L17.2,88.7 L19.6,89.2 L21.9,89.8 L23.8,90.4 L25.0,91.0 L25.4,91.6 L25.1,92.0 L24.1,92.4 L22.8,92.7 L21.4,92.8 L20.3,92.7 L19.9,92.5 L20.4,92.2 L22.0,91.7 L25.0,91.0 L29.3,90.2 L34.9,89.3 L41.7,88.5 L49.4,87.7 L57.8,87.2 L66.5,86.9 L75.3,87.1 L83.9,87.9 L91.8,89.2 L99.0,91.0 L105.1,93.3 L110.0,95.8 L113.6,98.4 L115.8,100.8 L116.6,102.5 L115.8,103.3 L113.6,102.7 L110.0,100.6 L105.1,96.7 L99.0,91.0 L91.9,83.6 L84.1,74.9 L75.8,65.1 L67.3,55.1 L58.8,45.3 L50.5,36.5 L42.9,29.4 L35.9,24.5 L29.9,22.3 L25.0,23.0 L21.2,26.6 L18.4,32.7 L16.8,41.0 L16.1,50.7 L16.3,60.9 L17.2,70.8 L18.7,79.5 L20.6,86.1 L22.8,90.1 L25.0,91.0 L27.2,88.8 L29.2,83.6 L30.8,75.9 L32.0,66.5 L32.6,56.1 L32.5,45.8 L31.7,36.6 L30.1,29.3 L27.8,24.6 L25.0,23.0 L21.8,24.6 L18.4,29.3 L15.2,36.6 L12.5,45.9 L10.7,56.2 L10.1,66.5 L11.1,76.0 L13.9,83.7 L18.5,88.8 L25.0,91.0 L33.2,90.0 L42.7,86.0 L53.1,79.3 L63.7,70.6 L74.0,60.6 L83.3,50.4 L90.9,40.8 L96.3,32.5 L99.0,26.5 L99.0,23.0 L96.1,22.4 L90.7,24.6 L83.0,29.5 L73.6,36.6 L63.4,45.4 L53.0,55.1 L43.3,65.1 L35.0,74.8 L28.7,83.6 L25.0,91.0 L24.1,96.8 L26.0,100.9 L30.7,103.2 L37.7,104.0 L46.7,103.4 L57.1,101.7 L68.1,99.4 L79.1,96.6 L89.6,93.8 L99.0,91.0 L106.9,88.5 L113.0,86.4 L117.1,84.9 L119.2,84.0 L119.5,83.7 L118.0,84.0 L115.0,84.9 L110.6,86.4 L105.2,88.5 L99.0,91.0 L92.1,93.8 L84.7,96.6 L77.0,99.4 L69.2,101.7 L61.2,103.4 L53.3,104.0 L45.6,103.2 L38.2,100.9 L31.3,96.8 L25.0,91.0 L19.5,83.6 L15.1,74.8 L11.8,65.1 L9.7,55.1 L9.0,45.4 L9.7,36.6 L11.7,29.5 L15.0,24.6 L19.5,22.4 L25.0,23.0 L31.3,26.5 L38.3,32.6 L45.7,40.8 L53.5,50.4 L61.4,60.7 L69.4,70.6 L77.2,79.3 L84.8,86.0 L92.2,90.0 L99.0,91.0 L105.2,88.8 L110.6,83.7 L114.9,76.1 L118.0,66.6 L119.5,56.3 L119.3,46.0 L117.2,36.7 L113.1,29.4 L107.0,24.7 L99.0,23.0 L89.5,24.5 L78.9,29.1 L67.6,36.4 L56.4,45.6 L45.9,55.8 L36.8,66.2 L29.8,75.7 L25.2,83.4 L23.6,88.7 L25.0,91.0 L29.3,90.2 L36.3,86.3 L45.3,79.7 L55.7,71.0 L66.5,61.0 L77.0,50.7 L86.2,41.0 L93.3,32.7 L97.7,26.5 L99.0,23.0 L97.2,22.4 L92.3,24.8 L84.8,29.9 L75.3,37.2 L64.7,46.2 L53.9,56.1 L43.7,66.2 L35.1,75.8 L28.7,84.2 L25.0,91.0 L24.3,96.0 L26.7,99.0 L31.9,100.3 L39.5,100.0 L48.9,98.7 L59.4,96.7 L70.4,94.5 L81.0,92.7 L90.7,91.4 L99.0,91.0 L105.5,91.5 L110.2,92.7 L112.9,94.5 L113.8,96.5 L113.2,98.4 L111.4,99.5 L108.7,99.7 L105.6,98.4 L102.2,95.5 L99.0,91.0 L96.1,84.8 L93.8,77.3 L92.1,68.7 L91.1,59.6 L90.8,50.5 L91.3,42.0 L92.4,34.5 L94.1,28.6 L96.3,24.7 L99.0,23.0 L101.9,23.6 L104.8,26.4 L107.6,31.3 L109.9,38.0 L111.4,46.0 L111.9,55.0 L111.0,64.5 L108.7,73.9 L104.7,82.9 L99.0,91.0 L91.7,97.9 L83.1,103.4 L73.6,107.3 L63.5,109.5 L53.6,110.0 L44.3,108.9 L36.3,106.3 L30.2,102.3 L26.3,97.2 L25.0,91.0 L26.3,84.1 L30.2,76.6 L36.4,68.9 L44.5,61.0 L53.9,53.3 L64.1,45.9 L74.2,39.0 L83.8,32.8 L92.2,27.4 L99.0,23.0 L104.0,19.5 L107.1,17.1 L108.4,15.6 L108.2,14.9 L106.9,15.1 L104.9,16.0 L102.7,17.4 L100.8,19.1 L99.5,21.0 L99.0,23.0 L99.4,24.9 L100.7,26.5 L102.6,27.8 L104.8,28.6 L106.8,28.9 L108.1,28.7 L108.3,27.9 L107.0,26.7 L104.0,25.0 L99.0,23.0 L92.3,20.8 L83.9,18.5 L74.5,16.5 L64.4,14.8 L54.2,13.7 L44.8,13.4 L36.7,14.0 L30.4,15.8 L26.4,18.8 L25.0,23.0 L26.2,28.4 L30.1,34.8 L36.2,42.0 L44.1,49.9 L53.4,57.9 L63.4,66.0 L73.5,73.5 L83.2,80.4 L91.8,86.3 L99.0,91.0 L104.6,94.4 L108.4,96.5 L110.6,97.4 L111.1,97.4 L110.4,96.5 L108.7,95.2 L106.4,93.8 L103.8,92.4 L101.3,91.5 L99.0,91.0 L97.1,91.1 L95.8,91.8 L95.1,93.0 L94.9,94.4 L95.1,95.7 L95.7,96.7 L96.5,96.9 L97.3,96.2 L98.2,94.3 L99.0,91.0 L99.6,86.3 L100.1,80.3 L100.5,73.3 L100.7,65.4 L100.7,57.1 L100.7,48.8 L100.5,40.8 L100.1,33.7 L99.6,27.7 L99.0,23.0 L98.2,19.7 L97.3,17.9 L96.4,17.3 L95.6,17.7 L95.0,18.9 L94.7,20.3 L94.9,21.8 L95.6,22.8 L97.0,23.3 L99.0,23.0 L101.5,22.0 L104.3,20.2 L107.2,18.1 L109.8,15.9 L111.7,14.0 L112.5,12.9 L111.9,13.0 L109.6,14.5 L105.3,17.9 L99.0,23.0 L90.9,29.9 L81.3,38.3 L70.7,47.6 L59.7,57.5 L49.1,67.1 L39.6,75.9 L31.9,83.2 L26.7,88.3 L24.3,91.0 L25.0,91.0 L28.8,88.3 L35.3,83.0 L44.1,75.6 L54.5,66.7 L65.4,57.0 L76.0,47.4 L85.5,38.4 L92.8,31.1 L97.5,25.8 L99.0,23.0 L97.3,23.0 L92.5,25.7 L85.1,30.9 L75.6,38.2 L65.0,47.0 L54.1,56.7 L43.9,66.5 L35.2,75.8 L28.7,84.2 L25.0,91.0 L24.3,96.1 L26.6,99.4 L31.8,100.9 L39.4,100.9 L48.8,99.8 L59.3,97.9 L70.3,95.8 L80.9,93.7 L90.7,92.0 L99.0,91.0 L105.5,90.7 L110.2,91.2 L112.9,92.2 L113.8,93.6 L113.2,95.0 L111.3,96.1 L108.6,96.5 L105.4,95.9 L102.1,94.1 L99.0,91.0 L96.3,86.5 L94.1,80.7 L92.6,73.8 L91.8,66.1 L91.7,58.0 L92.3,49.8 L93.4,41.8 L95.0,34.5 L96.9,28.2 L99.0,23.0 L101.2,19.1 L103.3,16.4 L105.2,15.0 L106.7,14.7 L107.6,15.3 L107.8,16.5 L107.2,18.2 L105.5,19.9 L102.8,21.6 L99.0,23.0 L94.1,24.1 L88.1,24.8 L81.2,25.0 L73.5,24.9 L65.3,24.6 L56.8,24.1 L48.2,23.6 L39.9,23.2 L32.1,23.0 L25.0,23.0 L18.8,23.3 L13.8,23.7 L10.2,24.3 L7.9,24.9 L7.1,25.4 L7.8,25.6 L10.1,25.6 L13.8,25.1 L18.8,24.2 L25.0,23.0 L32.2,21.5 L40.3,19.8 L48.8,18.1 L57.5,16.7 L66.2,15.7 L74.5,15.3 L82.2,15.8 L88.9,17.1 L94.6,19.5 L99.0,23.0 L102.2,27.5 L104.1,32.9 L104.9,39.2 L104.7,46.1 L103.9,53.5 L102.7,61.2 L101.3,69.0 L100.1,76.7 L99.3,84.1 L99.0,91.0 L99.3,97.2 L100.2,102.4 L101.5,106.6 L103.0,109.4 L104.4,110.7 L105.4,110.4 L105.6,108.2 L104.8,104.2 L102.6,98.4 L99.0,91.0 L93.9,82.2 L87.4,72.3 L79.7,61.9 L71.2,51.6 L62.1,41.9 L53.1,33.6 L44.5,27.1 L36.7,23.0 L30.1,21.6 L25.0,23.0 L21.4,27.2 L19.3,33.7 L18.6,42.2 L19.0,52.0 L20.2,62.1 L21.8,71.8 L23.4,80.2 L24.6,86.5 L25.2,90.2 L25.0,91.0 L24.0,88.7 L22.3,83.6 L20.1,76.1 L17.9,66.9 L15.9,56.8 L14.8,46.8 L14.8,37.6 L16.4,30.2 L19.8,25.2 L25.0,23.0 L32.0,23.8 L40.5,27.6 L50.1,33.9 L60.2,42.3 L70.3,51.9 L79.6,62.0 L87.7,71.6 L93.8,80.1 L97.7,86.7 L99.0,91.0 L97.7,92.6 L93.9,91.4 L87.8,87.6 L79.9,81.4 L70.7,73.2 L60.8,63.6 L50.7,53.2 L41.1,42.6 L32.4,32.4 L25.0,23.0 L19.1,14.9 L15.0,8.4 L12.5,3.8 L11.5,1.1 L12.0,0.3 L13.5,1.5 L15.9,4.6 L18.8,9.3 L21.9,15.5 L25.0,23.0 L27.8,31.4 L30.2,40.5 L32.0,49.8 L33.1,59.0 L33.5,67.6 L33.1,75.4 L32.0,81.9 L30.2,86.9 L27.8,89.9 L25.0,91.0 L21.9,90.0 L18.8,86.9 L15.9,81.9 L13.6,75.3 L12.1,67.3 L11.7,58.5 L12.7,49.2 L15.2,39.9 L19.3,31.0 L25.0,23.0 L32.2,16.2 L40.6,10.8 L50.0,7.0 L59.7,4.9 L69.4,4.6 L78.5,5.7 L86.4,8.4 L92.7,12.3 L97.0,17.2 L99.0,23.0 L98.5,29.4 L95.7,36.3 L90.5,43.5 L83.3,50.8 L74.6,58.1 L64.7,65.3 L54.3,72.3 L43.9,79.0 L33.9,85.3 L25.0,91.0 L17.4,96.0 L11.5,100.2 L7.4,103.4 L5.2,105.5 L4.8,106.4 L6.2,105.9 L9.1,104.1 L13.4,101.0 L18.8,96.6 L25.0,91.0 L31.9,84.5 L39.1,77.2 L46.7,69.5 L54.4,61.5 L62.1,53.6 L69.9,46.0 L77.5,39.0 L85.0,32.8 L92.2,27.4 L99.0,23.0 L105.3,19.6 L110.7,17.2 L115.2,15.8 L118.4,15.2 L120.0,15.4 L119.8,16.2 L117.6,17.5 L113.4,19.1 L107.1,21.0 L99.0,23.0 L89.3,24.9 L78.5,26.7 L67.2,28.2 L55.9,29.3 L45.4,29.9 L36.4,29.8 L29.4,29.1 L25.0,27.7 L23.5,25.6 L25.0,23.0 L29.4,20.0 L36.4,16.9 L45.4,13.9 L55.6,11.4 L66.4,9.7 L76.8,9.2 L85.9,10.1 L93.0,12.6 L97.5,16.9 L99.0,23.0 L97.5,30.6 L93.0,39.5 L85.9,49.1 L76.8,59.0 L66.4,68.5 L55.6,77.0 L45.4,83.9 L36.4,88.8 L29.4,91.2 L25.0,91.0 L23.5,88.2 L25.0,83.1 L29.4,76.0 L36.4,67.4 L45.4,58.0 L55.9,48.5 L67.2,39.7 L78.5,32.1 L89.3,26.4 L99.0,23.0 L107.1,22.1 L113.3,23.7 L117.5,27.7 L119.7,33.9 L119.8,41.9 L118.2,51.2 L115.1,61.3 L110.6,71.6 L105.2,81.7 L99.0,91.0 L92.3,99.2 L85.2,105.9 L77.8,110.8 L70.2,113.9 L62.5,114.9 L54.7,113.8 L47.0,110.8 L39.3,105.8 L32.0,99.2 L25.0,91.0 L18.7,81.7 L13.3,71.7 L9.0,61.4 L6.1,51.3 L4.7,42.0 L5.2,34.1 L7.5,27.8 L11.6,23.8 L17.5,22.1 L25.0,23.0 L33.7,26.4 L43.4,32.0 L53.5,39.4 L63.6,48.2 L73.1,57.7 L81.7,67.1 L88.9,75.7 L94.4,82.9 L97.8,88.2 L99.0,91.0 L98.0,91.2 L94.8,88.8 L89.5,84.0 L82.5,77.0 L74.1,68.4 L64.6,58.9 L54.5,49.0 L44.2,39.3 L34.3,30.5 L25.0,23.0 L16.8,17.1 L10.1,13.0 L5.1,10.7 L2.0,10.1 L0.9,10.8 L2.0,12.6 L5.1,15.1 L10.1,17.9 L16.8,20.6 L25.0,23.0 L34.3,24.9 L44.3,26.1 L54.5,26.6 L64.6,26.6 L74.1,26.1 L82.5,25.4 L89.5,24.5 L94.7,23.8 L97.9,23.2 L99.0,23.0 L97.9,23.1 L94.7,23.5 L89.5,24.1 L82.5,24.8 L74.1,25.4 L64.7,25.7 L54.6,25.7 L44.3,25.3 L34.3,24.4 L25.0,23.0 L16.8,21.3 L9.9,19.4 L4.8,17.4 L1.7,15.7 L0.6,14.5 L1.6,14.1 L4.7,14.5 L9.8,16.1 L16.7,19.0 L25.0,23.0 L34.4,28.2 L44.5,34.5 L54.9,41.6 L65.1,49.3 L74.6,57.2 L83.0,65.2 L89.9,72.8 L95.0,79.7 L98.1,85.9 L99.0,91.0 L97.7,95.0 L94.4,97.8 L89.1,99.5 L82.0,100.1 L73.6,99.9 L64.3,98.8 L54.3,97.2 L44.1,95.3 L34.2,93.1 L25.0,91.0 L16.8,89.0 L10.0,87.3 L4.8,86.0 L1.4,85.2 L0.1,84.9 L0.9,85.1 L3.9,85.9 L9.1,87.2 L16.2,89.0 L25.0,91.0 L35.2,93.2 L46.3,95.4 L57.8,97.5 L69.0,99.1 L79.4,100.2 L88.3,100.4 L95.1,99.8 L99.3,98.0 L100.7,95.1 L99.0,91.0 L94.4,85.8 L87.3,79.6 L78.1,72.6 L67.6,65.0 L56.6,57.1 L46.1,49.2 L36.9,41.6 L30.0,34.5 L25.9,28.3 L25.0,23.0 L27.4,18.9 L33.0,15.9 L41.3,14.1 L51.5,13.4 L62.7,13.6 L73.8,14.7 L83.9,16.4 L91.9,18.4 L97.1,20.7 L99.0,23.0 L97.4,25.1 L92.4,26.9 L84.6,28.3 L74.6,29.1 L63.5,29.3 L52.2,29.0 L41.8,28.1 L33.3,26.8 L27.5,25.0 L25.0,23.0 L25.9,20.9 L30.2,18.9 L37.4,17.0 L46.8,15.6 L57.7,14.8 L68.9,14.7 L79.5,15.4 L88.5,17.0 L95.2,19.5 L99.0,23.0 L99.6,27.5 L97.0,32.8 L91.5,38.9 L83.6,45.7 L73.8,53.0 L63.1,60.7 L52.2,68.5 L41.8,76.3 L32.5,83.9 L25.0,91.0 L19.4,97.4 L15.9,102.9 L14.2,107.2 L14.3,110.1 L15.5,111.4 L17.6,111.0 L20.0,108.7 L22.2,104.5 L24.0,98.6 L25.0,91.0 L25.2,82.1 L24.6,72.3 L23.4,62.1 L21.8,52.0 L20.3,42.6 L19.2,34.5 L18.8,28.1 L19.5,23.9 L21.5,22.2 L25.0,23.0 L30.0,26.3 L36.3,31.9 L43.8,39.2 L52.1,47.9 L60.9,57.2 L69.8,66.5 L78.4,75.1 L86.4,82.4 L93.3,87.8 L99.0,91.0 L103.3,91.8 L106.3,90.0 L107.8,86.0 L108.2,79.7 L107.7,71.8 L106.3,62.6 L104.6,52.6 L102.6,42.3 L100.7,32.3 L99.0,23.0 L97.7,14.8 L96.9,8.1 L96.6,3.1 L96.7,0.0 L97.1,-1.1 L97.6,-0.1 L98.2,3.0 L98.7,8.0 L99.0,14.7 L99.0,23.0 L98.7,32.5 L98.1,42.7 L97.3,53.2 L96.5,63.5 L95.8,73.0 L95.4,81.0 L95.4,87.2 L96.0,91.1 L97.2,92.4 L99.0,91.0 L101.3,87.0 L104.0,80.6 L106.7,72.5 L109.1,63.0 L110.8,53.1 L111.5,43.6 L110.9,35.1 L108.7,28.6 L104.7,24.4 L99.0,23.0 L91.6,24.5 L82.9,28.8 L73.2,35.6 L63.1,44.2 L53.0,53.9 L43.8,63.9 L35.9,73.4 L29.9,81.4 L26.2,87.5 L25.0,91.0 L26.5,91.7 L30.5,89.6 L36.8,84.9 L44.9,77.9 L54.3,69.2 L64.4,59.5 L74.4,49.4 L83.9,39.6 L92.2,30.6 L99.0,23.0 L104.1,17.0 L107.3,12.7 L108.8,10.3 L108.8,9.5 L107.7,10.0 L105.8,11.8 L103.6,14.2 L101.6,17.1 L99.9,20.1 L99.0,23.0 L98.9,25.5 L99.5,27.5 L100.7,28.9 L102.3,29.7 L103.8,29.8 L105.0,29.3 L105.3,28.3 L104.6,26.9 L102.5,25.1 L99.0,23.0 L94.0,20.8 L87.6,18.6 L80.0,16.6 L71.6,15.0 L62.8,14.0 L53.9,13.7 L45.3,14.4 L37.5,16.1 L30.7,19.0 L25.0,23.0 L20.6,28.2 L17.6,34.3 L15.8,41.4 L15.2,49.0 L15.6,56.9 L16.7,64.8 L18.4,72.5 L20.5,79.5 L22.8,85.8 L25.0,91.0 L27.1,95.1 L28.9,98.0 L30.4,99.8 L31.4,100.5 L31.9,100.2 L31.8,99.2 L31.0,97.6 L29.6,95.5 L27.6,93.3 L25.0,91.0 L22.0,88.8 L18.9,86.9 L15.8,85.4 L13.2,84.4 L11.4,84.0 L10.7,84.2 L11.5,85.1 L14.1,86.5 L18.6,88.5 L25.0,91.0 L33.1,93.8 L42.7,96.6 L53.3,99.3 L64.2,101.5 L74.8,102.9 L84.3,103.4 L92.0,102.5 L97.3,100.2 L99.7,96.4 L99.0,91.0 L95.2,84.2 L88.6,76.1 L79.7,67.3 L69.2,58.1 L58.1,49.0 L47.3,40.6 L37.8,33.4 L30.5,27.8 L26.1,24.3 L25.0,23.0 L27.3,24.1 L32.9,27.5 L41.3,32.9 L51.6,40.1 L62.9,48.5 L74.1,57.7 L84.2,67.0 L92.2,76.0 L97.3,84.1 L99.0,91.0 L97.1,96.4 L91.9,100.2 L83.7,102.4 L73.5,103.1 L62.1,102.4 L50.7,100.8 L40.5,98.5 L32.3,95.9 L26.9,93.3 L25.0,91.0 L26.6,89.2 L31.6,88.0 L39.5,87.4 L49.6,87.4 L60.8,87.9 L72.1,88.6 L82.5,89.5 L90.9,90.3 L96.6,90.8 L99.0,91.0 L98.0,90.8 L93.6,90.3 L86.3,89.6 L76.8,88.7 L65.9,87.9 L54.7,87.4 L44.2,87.3 L35.3,87.9 L28.7,89.1 L25.0,91.0 L24.5,93.4 L27.1,96.2 L32.7,99.0 L40.7,101.5 L50.4,103.3 L61.1,104.0 L72.0,103.4 L82.4,101.1 L91.5,96.9 L99.0,91.0 L104.6,83.5 L108.1,74.6 L109.8,64.9 L109.8,55.0 L108.5,45.4 L106.5,36.9 L104.2,29.9 L101.9,25.1 L100.1,22.7 L99.0,23.0 L98.7,25.9 L99.1,31.1 L100.1,38.3 L101.4,47.0 L102.8,56.4 L103.9,65.9 L104.3,74.6 L103.7,82.1 L102.0,87.7 L99.0,91.0 L94.6,91.8 L88.9,90.1 L82.1,86.0 L74.4,79.7 L66.0,71.7 L57.2,62.5 L48.5,52.4 L40.0,42.2 L32.1,32.2 L25.0,23.0 L19.0,14.9 L14.1,8.3 L10.6,3.4 L8.4,0.4 L7.7,-0.7 L8.5,0.3 L10.6,3.3 L14.2,8.2 L19.0,14.8 L25.0,23.0 L32.0,32.3 L39.7,42.4 L48.0,52.9 L56.5,63.1 L65.1,72.6 L73.4,80.7 L81.1,87.0 L88.1,91.0 L94.1,92.4 L99.0,91.0 L102.7,87.0 L105.3,80.5 L106.7,72.1 L107.2,62.5 L106.7,52.4 L105.7,42.7 L104.1,34.3 L102.4,27.8 L100.6,23.9 L99.0,23.0 L97.6,25.2 L96.6,30.3 L95.9,38.0 L95.7,47.4 L95.8,57.7 L96.1,68.0 L96.7,77.3 L97.5,84.6 L98.2,89.4 L99.0,91.0 L99.7,89.4 L100.3,84.6 L100.7,77.2 L100.9,67.8 L101.0,57.4 L100.9,46.9 L100.6,37.4 L100.2,29.8 L99.7,24.9 L99.0,23.0 L98.3,24.4 L97.5,29.0 L96.8,36.3 L96.2,45.5 L95.8,55.8 L95.7,66.3 L96.0,75.8 L96.6,83.5 L97.6,88.8 L99.0,91.0 L100.7,90.1 L102.6,86.1 L104.4,79.4 L106.1,70.7 L107.3,60.7 L107.9,50.4 L107.5,40.7 L106.0,32.5 L103.2,26.4 L99.0,23.0 L93.5,22.5 L86.7,24.9 L78.9,30.0 L70.4,37.3 L61.4,46.2 L52.6,56.1 L44.1,66.1 L36.5,75.6 L30.1,84.1 L25.0,91.0 L21.4,96.2 L19.4,99.4 L18.7,101.0 L19.1,100.9 L20.3,99.8 L21.9,97.9 L23.5,95.7 L24.7,93.6 L25.3,92.0 L25.0,91.0 L23.9,90.8 L22.0,91.4 L19.6,92.5 L17.2,94.0 L15.0,95.4 L13.8,96.5 L13.8,96.8 L15.5,96.2 L19.2,94.3 L25.0,91.0 L32.7,86.4 L42.0,80.5 L52.5,73.5 L63.5,65.8 L74.2,57.7 L83.8,49.5 L91.7,41.6 L97.1,34.4 L99.6,28.2 L99.0,23.0 L95.3,19.1 L88.8,16.4 L80.1,15.0 L69.8,14.6 L58.8,15.1 L48.2,16.2 L38.8,17.8 L31.4,19.6 L26.7,21.4 L25.0,23.0 L26.5,24.4 L31.1,25.3 L38.4,25.9 L47.6,26.2 L58.1,26.0 L68.9,25.6 L79.2,25.0 L88.0,24.3 L94.8,23.6 L99.0,23.0 L100.2,22.5 L98.5,22.2 L93.9,22.0 L86.9,22.0 L77.9,22.1 L67.5,22.3 L56.4,22.5 L45.2,22.7 L34.6,22.9 L25.0,23.0 L16.9,23.0 L10.5,22.8 L6.0,22.6 L3.5,22.3 L3.0,22.1 L4.4,21.9 L7.5,21.9 L12.1,22.1 L18.0,22.4 L25.0,23.0 L32.8,23.8 L41.3,24.7 L50.0,25.6 L58.8,26.4 L67.4,26.9 L75.5,27.2 L82.9,26.9 L89.4,26.2 L94.8,24.8 M0,91H124" fill="none" stroke="#a8f02a" stroke-width="1.1" stroke-opacity="0.92"/>
 <circle cx="25" cy="23" r="2.6" fill="#f01818"/><circle cx="99" cy="23" r="2.6" fill="#f01818"/>
 <circle cx="25" cy="91" r="2.6" fill="#f01818"/><circle cx="99" cy="91" r="2.6" fill="#f01818"/>
</svg>
<div class="btnmax" style="left:145px;top:468px;width:50.5px;height:18px"></div>
<div class="t" style="left:151.50px;top:471px;font-size:8.6px;color:#202020;">Maximize</div>
<div class="t" style="left:208.25px;top:455px;font-size:8.2px;font-weight:bold;-webkit-text-stroke:0;color:#000;transform:scaleX(0.92);transform-origin:0 0;-webkit-text-stroke:0.3px #000">Spectrum</div>
<svg class="a" style="left:209px;top:468px" width="137" height="114" viewBox="0 0 137 114"><rect width="137" height="114" fill="#000"/>
 <path d="M0.5,92.3V110.8M1.5,87.3V108.5M2.5,94.8V108.7M3.5,86.0V107.1M4.5,89.9V105.0M5.5,89.0V111.2M6.5,91.8V105.1M7.5,86.0V111.3M8.5,89.1V109.8M9.5,88.2V110.4M10.5,87.5V110.5M11.5,87.1V106.5M12.5,87.0V107.2M13.5,88.7V109.5M14.5,85.3V105.7M15.5,88.5V108.5M16.5,82.7V109.5M17.5,84.5V105.4M18.5,86.7V107.2M19.5,88.1V105.1M20.5,81.1V106.0M21.5,85.1V107.0M22.5,83.6V104.0M23.5,87.5V105.7M24.5,87.4V105.5M25.5,86.0V105.0M26.5,81.3V108.8M27.5,80.6V108.1M28.5,83.0V103.7M29.5,88.8V105.7M30.5,85.9V104.5M31.5,87.2V104.7M32.5,82.5V107.4M33.5,82.4V102.1M34.5,84.9V103.1M35.5,83.1V100.9M36.5,78.9V100.7M37.5,83.8V99.2M38.5,85.1V103.4M39.5,82.9V100.8M40.5,84.0V101.4M41.5,84.6V104.0M42.5,80.1V100.7M43.5,79.1V100.0M44.5,77.3V100.3M45.5,78.2V95.1M46.5,80.5V98.8M47.5,78.1V99.6M48.5,78.1V93.6M49.5,73.9V94.7M50.5,73.8V95.8M51.5,73.0V93.3M52.5,72.6V90.8M53.5,70.4V94.6M54.5,70.4V93.5M55.5,70.6V89.3M56.5,66.8V89.5M57.5,65.0V86.0M58.5,66.3V82.3M59.5,62.7V82.7M60.5,65.8V80.8M61.5,58.8V83.3M62.5,60.5V77.3M63.5,58.8V74.3M64.5,57.8V73.2M65.5,6.0V17.6M66.5,4.0V17.5M67.5,3.8V18.7M68.5,2.2V16.1M69.5,3.3V17.5M70.5,3.3V18.9M71.5,4.0V18.7M72.5,4.9V16.1M73.5,5.8V20.0M74.5,56.2V79.5M75.5,58.6V78.5M76.5,56.6V77.3M77.5,63.5V78.7M78.5,63.2V81.3M79.5,65.3V84.6M80.5,62.4V85.2M81.5,69.2V89.3M82.5,70.8V89.9M83.5,68.5V92.4M84.5,74.0V93.2M85.5,72.1V94.2M86.5,74.1V93.2M87.5,75.3V97.1M88.5,77.0V97.9M89.5,78.6V93.3M90.5,71.8V98.7M91.5,80.5V98.7M92.5,77.2V98.3M93.5,81.0V99.7M94.5,79.5V97.8M95.5,78.6V98.0M96.5,80.4V103.9M97.5,83.5V101.0M98.5,83.9V102.8M99.5,82.6V98.9M100.5,86.0V102.1M101.5,83.2V101.7M102.5,84.8V102.4M103.5,83.5V104.2M104.5,83.7V100.8M105.5,81.6V101.3M106.5,80.9V106.5M107.5,81.0V104.8M108.5,80.3V106.5M109.5,84.8V108.4M110.5,86.5V104.0M111.5,88.8V104.1M112.5,80.9V105.1M113.5,87.3V106.4M114.5,87.6V107.1M115.5,86.0V105.8M116.5,87.9V104.1M117.5,88.6V110.0M118.5,88.3V109.7M119.5,87.7V109.7M120.5,87.4V107.5M121.5,90.8V108.3M122.5,84.7V105.0M123.5,87.1V104.7M124.5,87.9V110.6M125.5,86.8V104.8M126.5,89.7V108.2M127.5,88.1V107.9M128.5,86.7V108.2M129.5,89.5V109.2M130.5,90.4V110.9M131.5,85.9V108.2M132.5,83.5V106.0M133.5,90.1V109.6M134.5,89.5V107.0M135.5,83.9V112.0M136.5,86.7V106.0M64.8,12V58M73.6,12V58M64.3,45V62M74.1,45V62M3.5,76V92M134,78V92" fill="none" stroke="#f8f020" stroke-width="1"/><path d="M1.5,108.5V114.0M2.5,108.7V114.0M7.5,111.3V114.0M8.5,109.8V114.0M9.5,110.4V114.0M10.5,110.5V114.0M16.5,109.5V114.0M23.5,105.7V114.0M24.5,105.5V114.0M29.5,105.7V114.0M30.5,104.5V114.0M31.5,104.7V114.0M32.5,107.4V113.7M37.5,99.2V109.8M38.5,103.4V111.6M40.5,101.4V112.5M41.5,104.0V113.5M46.5,98.8V108.5M51.5,93.3V106.3M54.5,93.5V104.1M57.5,86.0V104.7M59.5,82.7V96.3M74.5,79.5V84.3M75.5,78.5V97.5M77.5,78.7V93.5M78.5,81.3V95.1M79.5,84.6V92.2M80.5,85.2V100.9M81.5,89.3V98.5M85.5,94.2V113.6M86.5,93.2V106.6M88.5,97.9V105.3M89.5,93.3V110.0M90.5,98.7V105.8M92.5,98.3V103.5M94.5,97.8V106.1M99.5,98.9V114.0M100.5,102.1V106.8M101.5,101.7V109.9M104.5,100.8V105.4M106.5,106.5V113.5M108.5,106.5V113.6M109.5,108.4V114.0M113.5,106.4V112.1M114.5,107.1V114.0M115.5,105.8V114.0M116.5,104.1V108.9M119.5,109.7V114.0M120.5,107.5V114.0M121.5,108.3V113.4M123.5,104.7V114.0M125.5,104.8V114.0M128.5,108.2V114.0M129.5,109.2V114.0M133.5,109.6V114.0M134.5,107.0V114.0M136.5,106.0V114.0" fill="none" stroke="#a89c20" stroke-width="0.8"/>
</svg>
<div class="btnmax" style="left:351px;top:468px;width:50.5px;height:18px"></div>
<div class="t" style="left:357.50px;top:471px;font-size:8.6px;color:#202020;">Maximize</div>
<div class="t" style="left:417.00px;top:455px;font-size:8.2px;font-weight:bold;-webkit-text-stroke:0;color:#000;letter-spacing:0.3px;-webkit-text-stroke:0.3px #000">CCDF</div>
<svg class="a" style="left:418px;top:468px" width="116" height="114" viewBox="0 0 116 114"><rect width="116" height="114" fill="#000"/>
 <path d="M0,13 L116,31" stroke="#cc28cc" stroke-width="2"/>
 <path d="M0,8 L10,10.8 L19,14 L30,18.5 L45,24 L57,29.5 L65,34.5 L71.5,40 L80,48 L87.7,56 L94,65 L100.5,75 L105,82 L108.6,88 L112,98 L114.5,105 L116,113" fill="none" stroke="#e0dc40" stroke-width="1.1"/>
</svg>
<div class="btnmax" style="left:540.5px;top:468px;width:48.5px;height:18px"></div>
<div class="t" style="left:547.00px;top:471px;font-size:8.6px;color:#202020;">Maximize</div>
<div class="a" style="left:3px;top:592px;width:595px;height:1px;background:#5a66b0"></div>
<div class="a" style="left:3px;top:593px;width:595px;height:17px;background:linear-gradient(#f0f8ff 0px,#d2e4fa 1px,#c4d8f6 6px,#a8c8f0 12px,#90b8e8 17px)"></div>
<div class="t" style="left:8.80px;top:595px;font-size:9px;color:#202040;">Instrument Control</div>
<div class="a" style="left:86px;top:593px;width:62px;height:14px;background:#f7a66a;border:1px solid #3c4488;border-top:none"></div>
<div class="t" style="left:88.00px;top:595px;font-size:8.6px;color:#302018;">Graph Preview</div>
<div class="a" style="left:3px;top:610px;width:595px;height:14px;background:linear-gradient(#ecead8,#e4e4d0);border-top:1px solid #8c98a8"></div>
<div class="a" style="left:3px;top:624px;width:595px;height:1px;background:#dde0f0"></div>
<svg class="a" style="left:587px;top:614px" width="10" height="10"><g fill="#b8b4a0"><rect x="7" y="1" width="2" height="2"/><rect x="4" y="4" width="2" height="2"/><rect x="7" y="4" width="2" height="2"/><rect x="1" y="7" width="2" height="2"/><rect x="4" y="7" width="2" height="2"/><rect x="7" y="7" width="2" height="2"/></g></svg>
<div class="t" style="left:5.40px;top:613px;font-size:7.8px;font-weight:bold;-webkit-text-stroke:0;color:#000;-webkit-text-stroke:0.3px #000">Application: Generic signal</div>
<div class="t" style="left:190.50px;top:613px;font-size:7.8px;font-weight:bold;-webkit-text-stroke:0;color:#b01828;">AWG NA</div>
<div class="a" style="left:0px;top:625px;width:600px;height:2px;background:#6a70c8"></div>
<div class="a" style="left:0px;top:23px;width:3px;height:604px;background:#6274d4"></div>
</body></html>
